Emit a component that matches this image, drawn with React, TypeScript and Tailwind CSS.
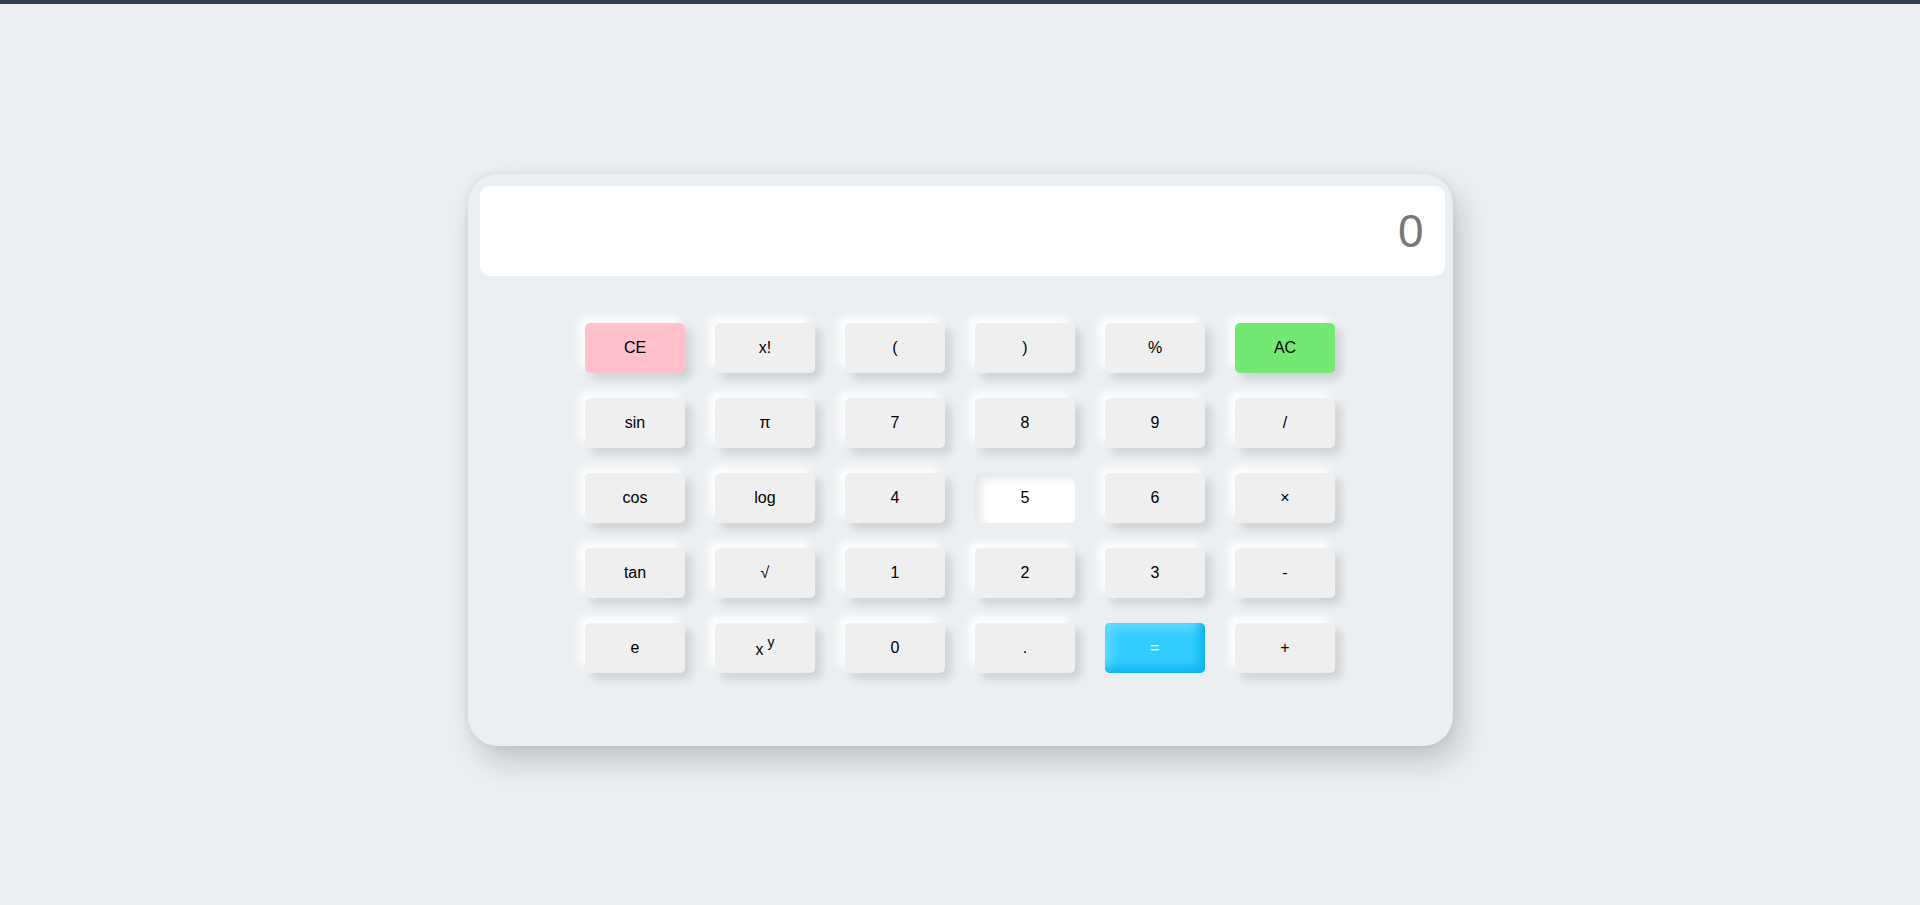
import React, { useState } from "react";

type Key = {
  label: React.ReactNode;
  value: string;
  kind?: "clear" | "reset" | "equal" | "active";
};

const keys: Key[] = [
  { label: "CE", value: "CE", kind: "clear" },
  { label: "x!", value: "!" },
  { label: "(", value: "(" },
  { label: ")", value: ")" },
  { label: "%", value: "%" },
  { label: "AC", value: "AC", kind: "reset" },
  { label: "sin", value: "sin(" },
  { label: "π", value: "π" },
  { label: "7", value: "7" },
  { label: "8", value: "8" },
  { label: "9", value: "9" },
  { label: "/", value: "/" },
  { label: "cos", value: "cos(" },
  { label: "log", value: "log(" },
  { label: "4", value: "4" },
  { label: "5", value: "5", kind: "active" },
  { label: "6", value: "6" },
  { label: "×", value: "*" },
  { label: "tan", value: "tan(" },
  { label: "√", value: "√(" },
  { label: "1", value: "1" },
  { label: "2", value: "2" },
  { label: "3", value: "3" },
  { label: "-", value: "-" },
  { label: "e", value: "e" },
  {
    label: (
      <span className="relative top-[2px]">
        x<sup className="ml-[4px] text-[14px] top-[-0.6em]">y</sup>
      </span>
    ),
    value: "^",
  },
  { label: "0", value: "0" },
  { label: ".", value: "." },
  { label: "=", value: "=", kind: "equal" },
  { label: "+", value: "+" },
];

const base =
  "h-[50px] w-[100px] rounded-[5px] text-[16px] cursor-pointer flex items-center justify-center";

const styles: Record<string, string> = {
  normal:
    "bg-[#efefef] text-black shadow-[-6px_-6px_10px_#ffffff,6px_6px_10px_rgba(0,0,0,0.13)]",
  clear:
    "bg-[#ffc0cb] text-black shadow-[-6px_-6px_10px_#ffffff,6px_6px_10px_rgba(0,0,0,0.13)]",
  reset:
    "bg-[#73e973] text-black shadow-[-6px_-6px_10px_#ffffff,6px_6px_10px_rgba(0,0,0,0.13)]",
  equal:
    "bg-[#33ccff] text-white shadow-[inset_-6px_-6px_10px_#0db5ee,inset_6px_6px_10px_#66dcff]",
  active:
    "bg-white text-black shadow-[inset_6px_6px_10px_rgba(0,0,0,0.1)]",
};

const App: React.FC = () => {
  const [display, setDisplay] = useState("0");

  const press = (k: Key) => {
    if (k.value === "AC") return setDisplay("0");
    if (k.value === "CE")
      return setDisplay(display.length > 1 ? display.slice(0, -1) : "0");
    if (k.value === "=") {
      try {
        const expr = display
          .replace(/π/g, String(Math.PI))
          .replace(/e/g, String(Math.E))
          .replace(/\^/g, "**");
        // eslint-disable-next-line no-new-func
        setDisplay(String(Function(`return (${expr})`)()));
      } catch {
        setDisplay("Error");
      }
      return;
    }
    setDisplay(display === "0" ? k.value : display + k.value);
  };

  return (
    <div className="min-h-screen bg-[#ebeff2] font-['Liberation_Sans',Arial,sans-serif]">
      <div className="h-[4px] bg-[#323e4f]" />
      <div className="pt-[170px]">
        <div className="mx-auto w-[985px] h-[572px] rounded-[30px] bg-[#ebeff2] pt-[12px] shadow-[8px_16px_30px_rgba(0,0,0,0.17),0_0_8px_rgba(0,0,0,0.08)]">
          {/* Display */}
          <div className="ml-[12px] mr-[8px] h-[90px] rounded-[10px] bg-white flex items-center justify-end pr-[21px]">
            <span className="text-[46px] text-[#777777] leading-none">
              {display}
            </span>
          </div>

          {/* Keys */}
          <div className="mx-auto mt-[47px] w-[750px] grid grid-cols-[repeat(6,100px)] gap-x-[30px] gap-y-[25px]">
            {keys.map((k, i) => (
              <button
                key={i}
                onClick={() => press(k)}
                className={`${base} ${styles[k.kind ?? "normal"]}`}
              >
                {k.label}
              </button>
            ))}
          </div>
        </div>
      </div>
    </div>
  );
};

export default App;
